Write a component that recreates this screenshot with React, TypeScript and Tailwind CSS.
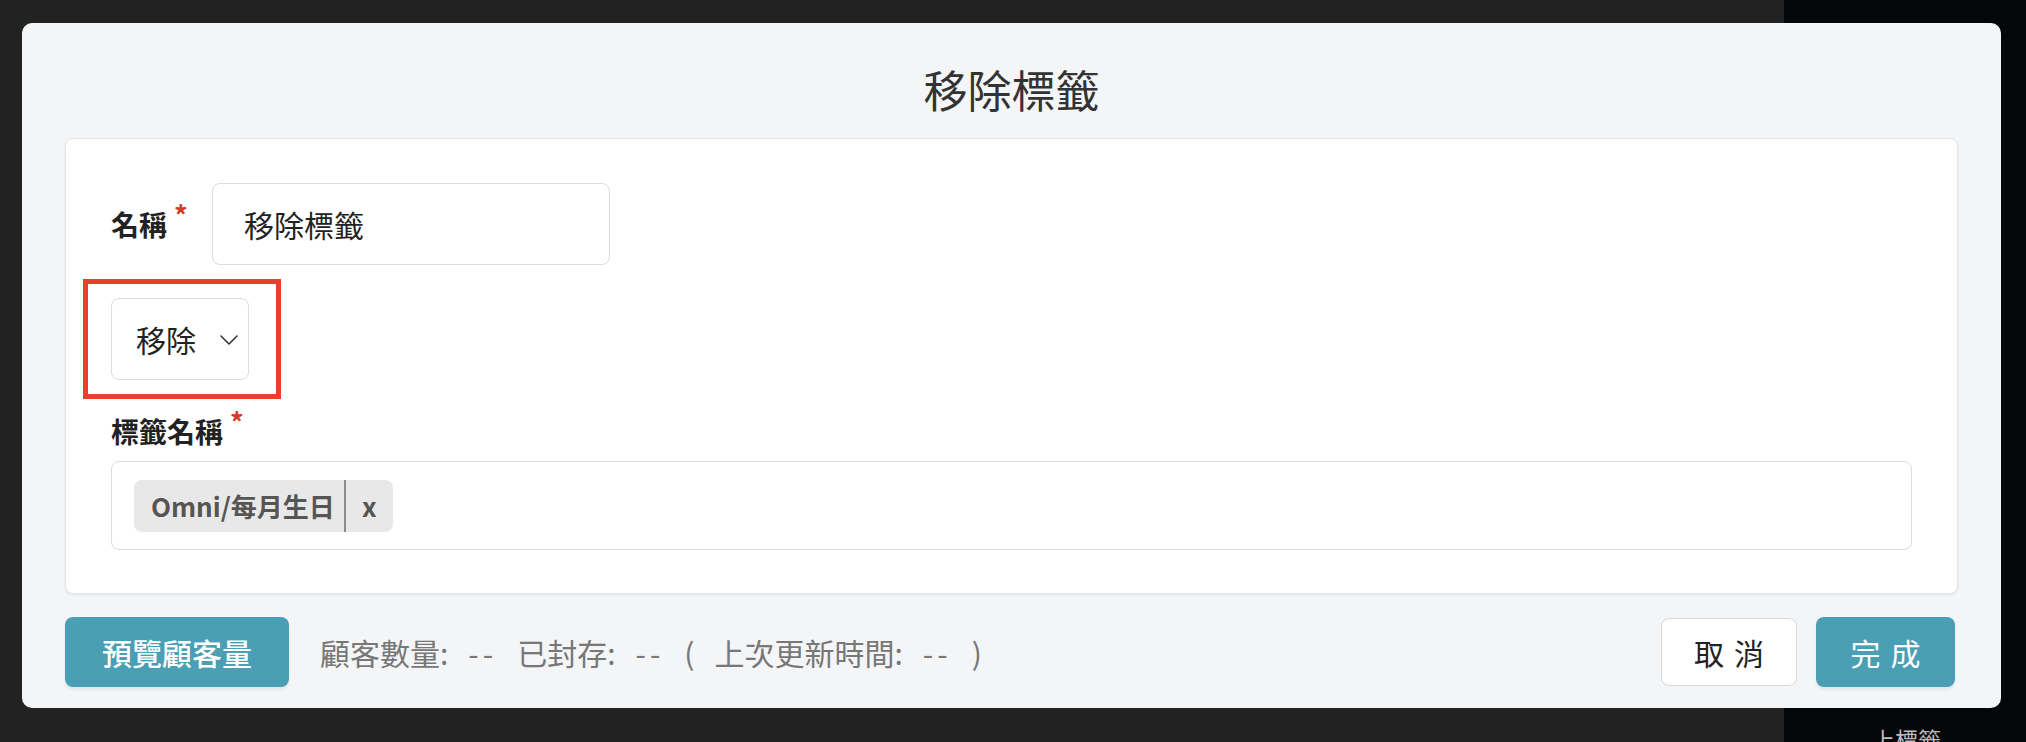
import React from "react";

const font = "font-['Noto_Sans_CJK_TC','Noto_Sans',sans-serif]";

function Chevron() {
    return (
        <svg width="18" height="10" viewBox="0 0 18 10" fill="none">
            <polyline points="1,1 9,9 17,1" stroke="#333" strokeWidth="1.6" strokeLinecap="round" strokeLinejoin="round" />
        </svg>
    );
}

function Required() {
    return <span className="self-start ml-[7px] -mt-[3px] text-[27px] leading-none font-bold text-[#d23a2c]">*</span>;
}

export default function App() {
    return (
        <div className={`relative w-[2026px] h-[742px] overflow-hidden flex ${font}`}>
            {/* page behind the dialog */}
            <div className="flex-1 bg-[#222222]" />
            <div className="w-[242px] bg-[#050608] pl-[88px] pt-[728px]">
                <span className="text-[23px] leading-none text-[#bdbdbd] whitespace-nowrap">上標籤</span>
            </div>

            {/* dialog */}
            <div className="absolute left-[22px] top-[23px] w-[1979px] h-[685px] rounded-[10px] bg-[#f4f5f7] px-[43px] flex flex-col">
                <div className="h-[115px] pt-[44px] text-center">
                    <h1 className="text-[44px] leading-[44px] text-[#333333]">移除標籤</h1>
                </div>

                <div className="h-[456px] rounded-[8px] bg-white border border-[#e3e5e8] shadow-[0_1px_3px_rgba(0,0,0,0.08)] pt-[44px] px-[45px]">
                    {/* name row */}
                    <div className="flex items-center">
                        <label className="w-[101px] flex items-center text-[28px] leading-[40px] font-bold text-[#222222]">
                            名稱<Required />
                        </label>
                        <div className="w-[398px] h-[82px] rounded-[8px] border-[1.5px] border-[#dcdcdc] bg-white flex items-center pl-[31px] text-[30px] text-[#222222]">
                            移除標籤
                        </div>
                    </div>

                    {/* mode select */}
                    <div className="relative w-[138px] mt-[33px]">
                        <div className="h-[82px] rounded-[8px] border-[1.5px] border-[#dcdcdc] bg-white flex items-center pl-[24px] pr-[10px] text-[30px] text-[#222222]">
                            <span>移除</span>
                            <span className="ml-auto mt-[2px]"><Chevron /></span>
                        </div>
                        <div className="absolute -left-[28px] -top-[19px] w-[198px] h-[120px] border-[5px] border-[#e8402a] pointer-events-none" />
                    </div>

                    {/* tag names */}
                    <label className="mt-[31px] mb-[10px] flex items-center text-[28px] leading-[40px] font-bold text-[#222222]">
                        標籤名稱<Required />
                    </label>
                    <div className="h-[89px] rounded-[8px] border-[1.5px] border-[#dcdcdc] bg-white flex items-center pl-[22px]">
                        <div className="h-[52px] rounded-[8px] bg-[#e8e8e8] flex items-stretch text-[26px] font-bold text-[#555555]">
                            <span className="flex items-center pl-[17px] pr-[9px]">Omni/每月生日</span>
                            <span className="w-[2px] bg-[#8c8c8c]" />
                            <span className="w-[47px] flex items-center justify-center">x</span>
                        </div>
                    </div>
                </div>

                {/* footer */}
                <div className="mt-[23px] flex items-center">
                    <button className="w-[224px] h-[70px] rounded-[8px] bg-[#4a9fb4] text-white text-[30px] font-medium shadow-[0_3px_3px_rgba(0,0,0,0.06)]">
                        預覽顧客量
                    </button>
                    <div className="ml-[31px] flex items-center gap-[20px] text-[30px] text-[#777777]">
                        <span>顧客數量:</span>
                        <span className="tracking-[4px]">--</span>
                        <span>已封存:</span>
                        <span className="tracking-[4px]">--</span>
                        <span>(</span>
                        <span>上次更新時間:</span>
                        <span className="tracking-[4px]">--</span>
                        <span>)</span>
                    </div>
                    <div className="ml-auto mr-[3px] flex items-center gap-[19px]">
                        <button className="w-[136px] h-[68px] rounded-[8px] bg-white border-[1.5px] border-[#d8d8d8] flex items-center justify-center gap-[10px] text-[30px] text-[#222222]">
                            <span>取</span><span>消</span>
                        </button>
                        <button className="w-[139px] h-[70px] rounded-[8px] bg-[#4a9fb4] flex items-center justify-center gap-[10px] text-[30px] text-white shadow-[0_3px_3px_rgba(0,0,0,0.06)]">
                            <span>完</span><span>成</span>
                        </button>
                    </div>
                </div>
            </div>
        </div>
    );
}
